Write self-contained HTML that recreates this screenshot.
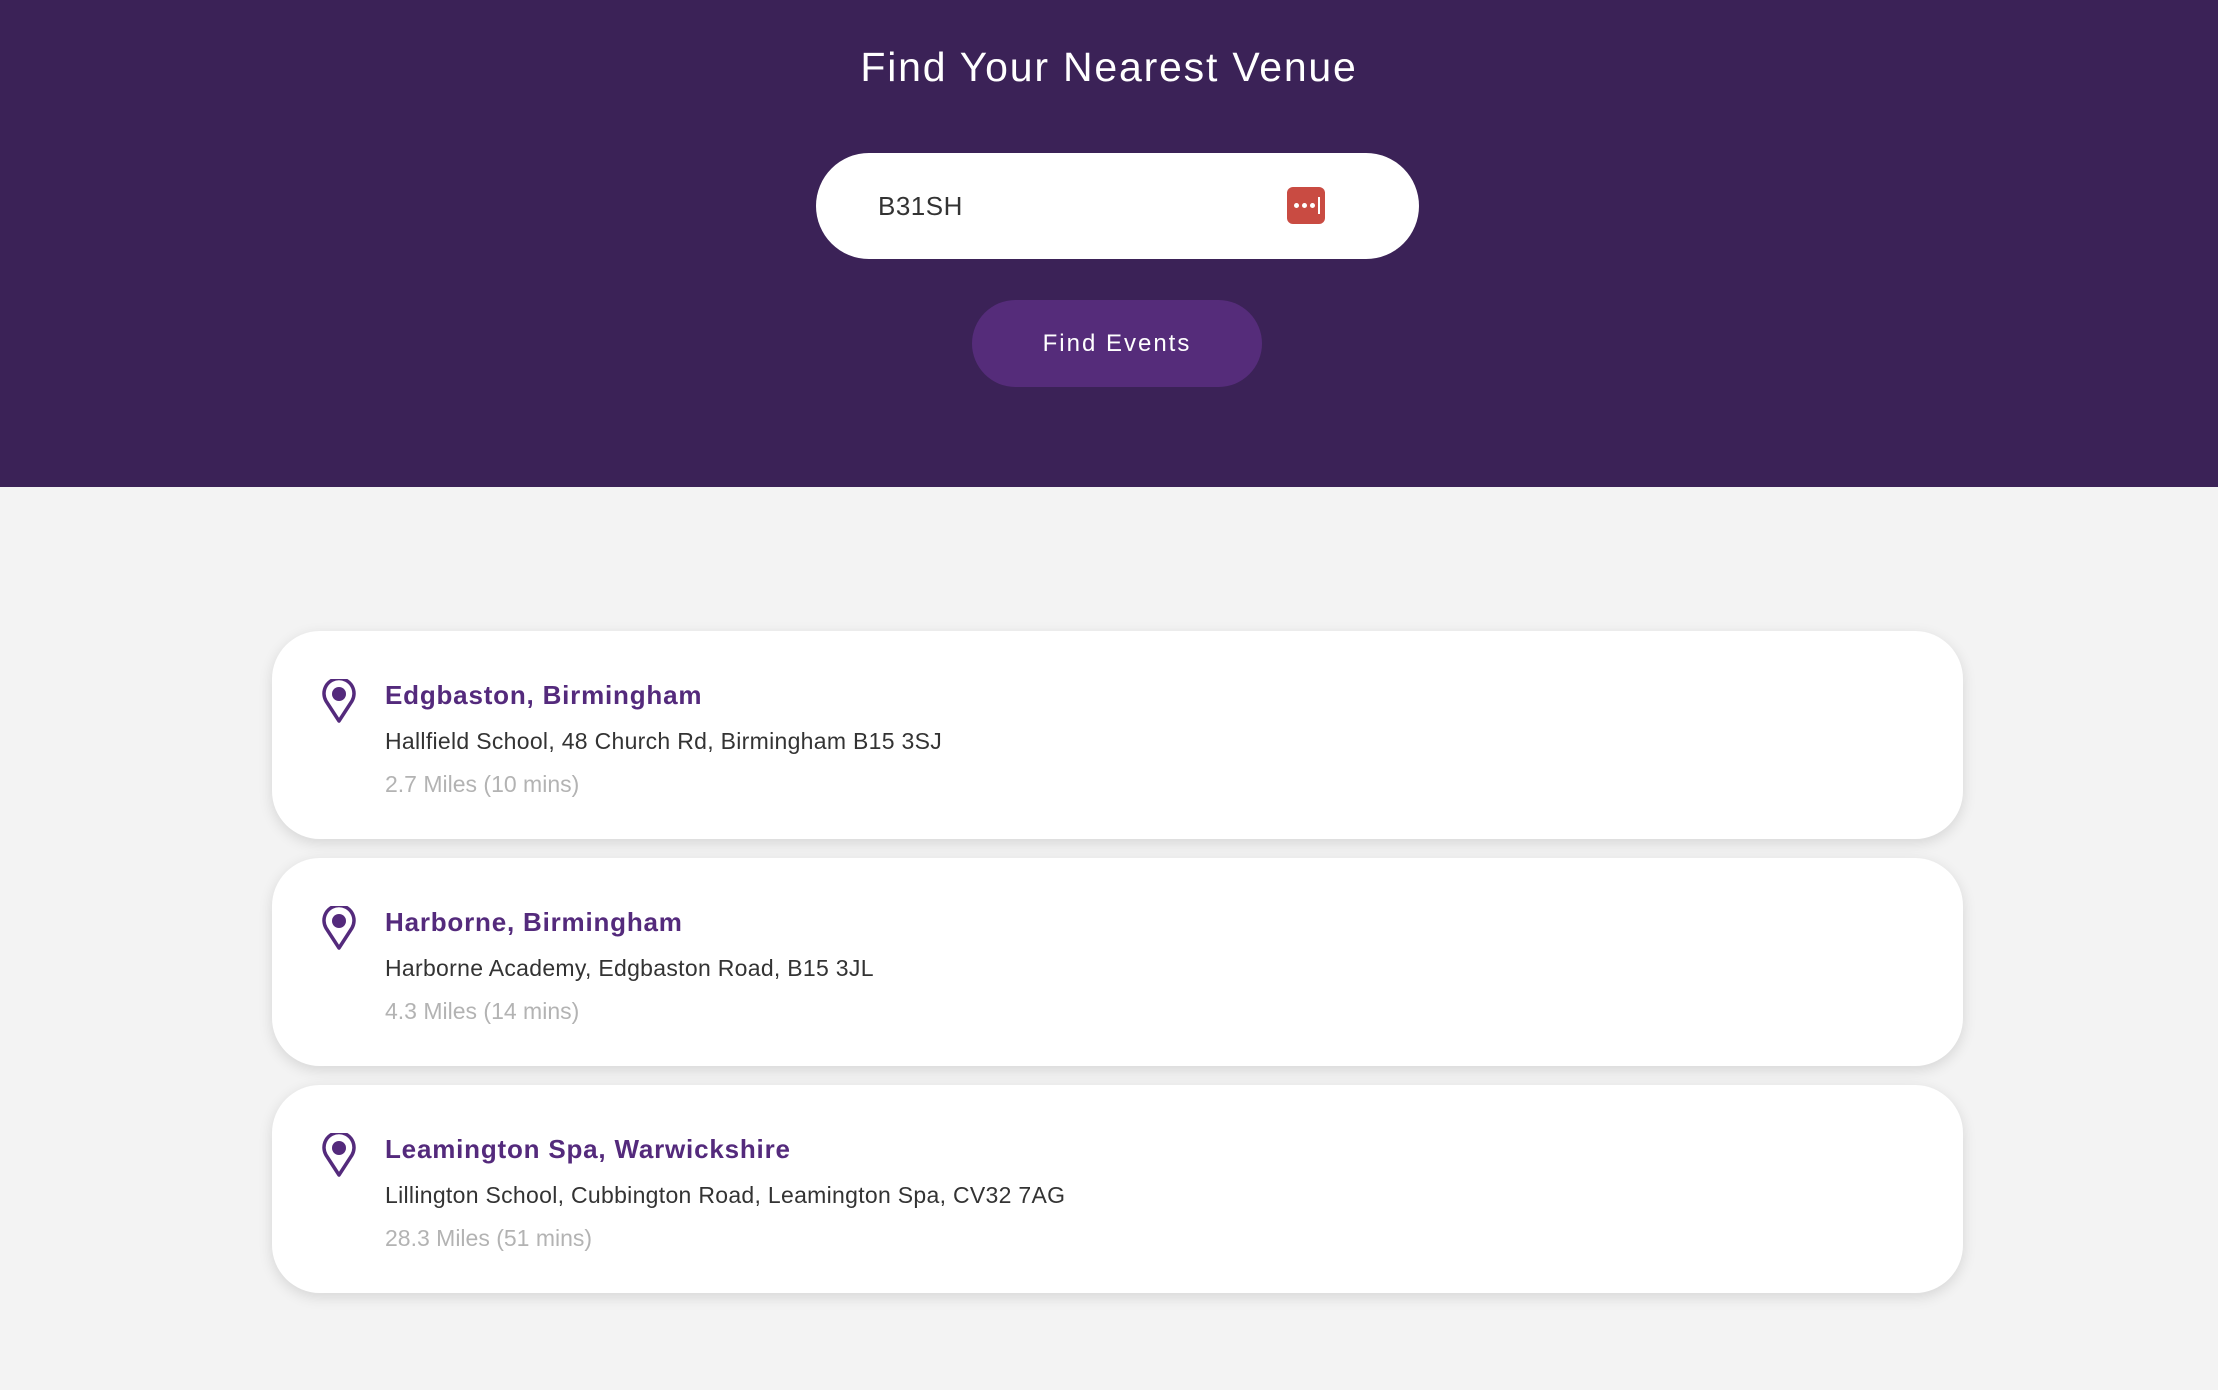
<!DOCTYPE html>
<html><head><meta charset="utf-8"><style>
*{margin:0;padding:0;box-sizing:border-box}
body{width:2218px;height:1390px;background:#f3f3f3;font-family:"Liberation Sans",sans-serif;overflow:hidden;position:relative}
.hdr{position:absolute;left:0;top:0;width:2218px;height:487px;background:#3b2257}
h1{position:absolute;top:41px;left:0;width:100%;text-align:center;color:#fff;font-size:41px;font-weight:normal;letter-spacing:1.8px;line-height:52px}
.inp{position:absolute;left:816px;top:153px;width:603px;height:106px;background:#fff;border-radius:53px}
.inp span{position:absolute;left:62px;top:37px;font-size:26px;color:#333;line-height:32px;letter-spacing:0.5px}
.ico{position:absolute;left:471px;top:34px;width:38px;height:37px;background:#c94b42;border-radius:6px}
.ico i{position:absolute;top:16px;width:5px;height:5px;border-radius:50%;background:#fff}
.btn{position:absolute;left:972px;top:300px;width:290px;height:87px;background:#552c7a;border-radius:44px;color:#fff;font-size:24px;letter-spacing:2px;text-align:center;line-height:87px}
.card{position:absolute;left:272px;width:1691px;height:208px;background:#fff;border-radius:48px;box-shadow:0 4px 14px rgba(0,0,0,0.12)}
.card svg{position:absolute;left:49px;top:48px}
.t{position:absolute;left:113px;top:48px;font-size:26px;font-weight:bold;color:#542a7c;line-height:32px;letter-spacing:0.8px}
.a{position:absolute;left:113px;top:96px;font-size:23px;color:#333;line-height:28px;letter-spacing:0.3px}
.d{position:absolute;left:113px;top:139px;font-size:23px;color:#b3b3b3;line-height:28px}
</style></head><body>
<div class="hdr">
<h1>Find Your Nearest Venue</h1>
<div class="inp"><span>B31SH</span><div class="ico"><i style="left:7px"></i><i style="left:15px"></i><i style="left:23px"></i><b style="position:absolute;left:31px;top:10px;width:2px;height:17px;background:#fff"></b></div></div>
<div class="btn">Find Events</div>
</div>
<div class="card" style="top:631px">
<svg width="36" height="46" viewBox="0 0 36 46"><path d="M18 42 L5 22 A15 15 0 1 1 31 22 Z" fill="none" stroke="#542a7c" stroke-width="3.5" stroke-linejoin="round"/><circle cx="18" cy="15" r="7" fill="#542a7c"/></svg>
<div class="t">Edgbaston, Birmingham</div>
<div class="a">Hallfield School, 48 Church Rd, Birmingham B15 3SJ</div>
<div class="d">2.7 Miles (10 mins)</div>
</div>
<div class="card" style="top:858px">
<svg width="36" height="46" viewBox="0 0 36 46"><path d="M18 42 L5 22 A15 15 0 1 1 31 22 Z" fill="none" stroke="#542a7c" stroke-width="3.5" stroke-linejoin="round"/><circle cx="18" cy="15" r="7" fill="#542a7c"/></svg>
<div class="t">Harborne, Birmingham</div>
<div class="a">Harborne Academy, Edgbaston Road, B15 3JL</div>
<div class="d">4.3 Miles (14 mins)</div>
</div>
<div class="card" style="top:1085px">
<svg width="36" height="46" viewBox="0 0 36 46"><path d="M18 42 L5 22 A15 15 0 1 1 31 22 Z" fill="none" stroke="#542a7c" stroke-width="3.5" stroke-linejoin="round"/><circle cx="18" cy="15" r="7" fill="#542a7c"/></svg>
<div class="t">Leamington Spa, Warwickshire</div>
<div class="a">Lillington School, Cubbington Road, Leamington Spa, CV32 7AG</div>
<div class="d">28.3 Miles (51 mins)</div>
</div>
</body></html>
